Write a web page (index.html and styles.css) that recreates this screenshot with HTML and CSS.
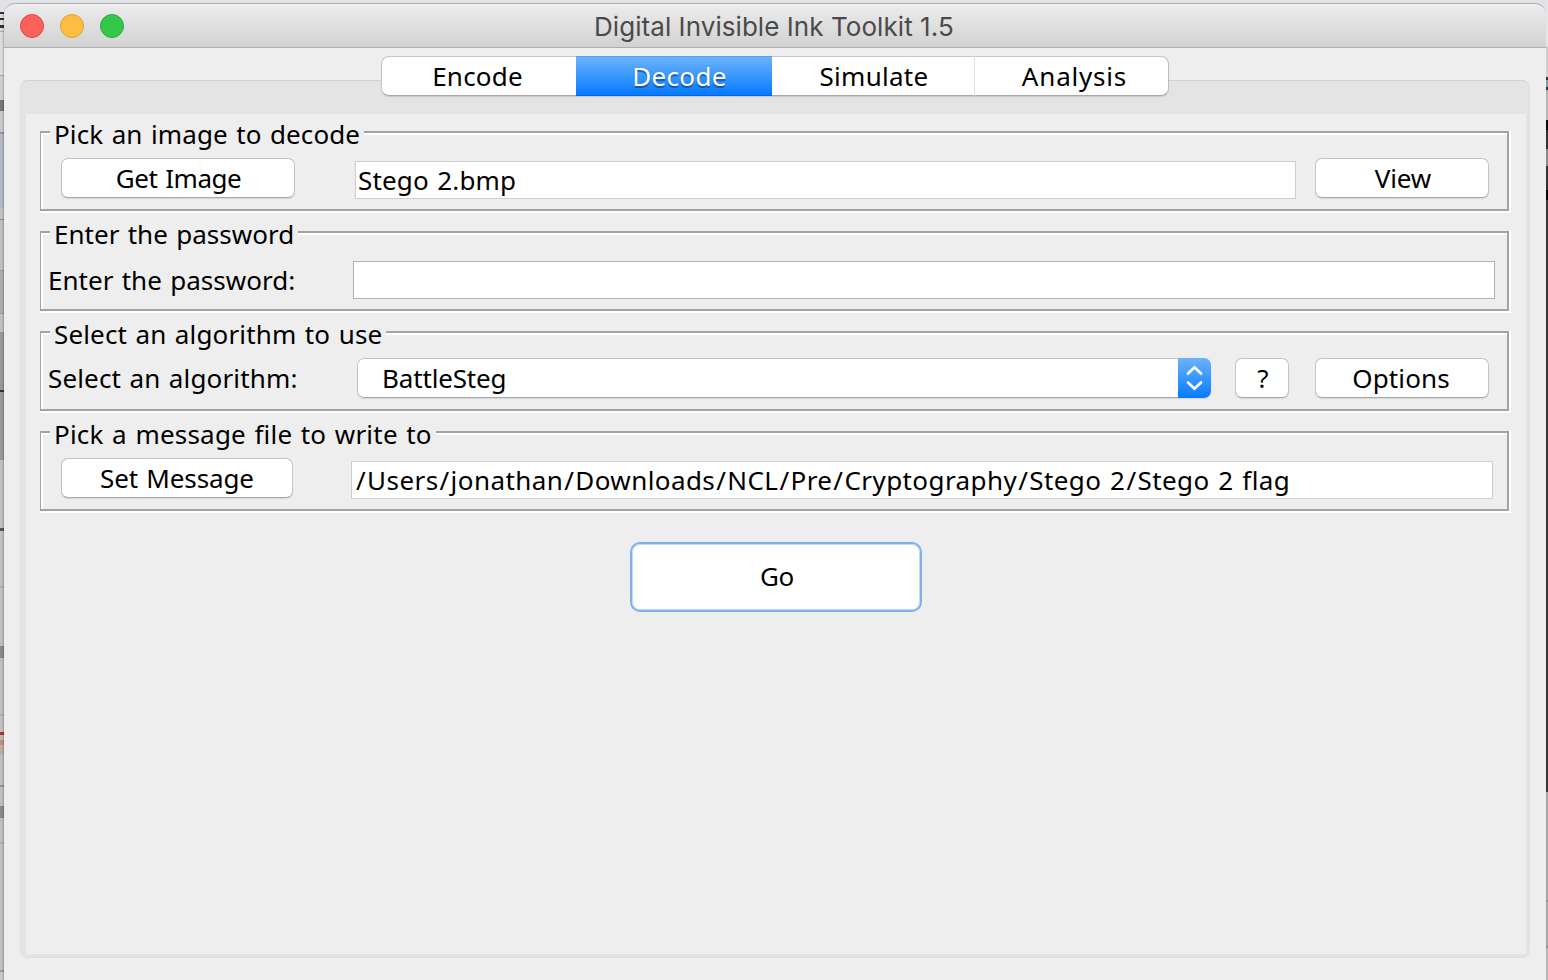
FILE: index.html
```
<!DOCTYPE html>
<html lang="en">
<head>
<meta charset="utf-8">
<title>Digital Invisible Ink Toolkit 1.5</title>
<link rel="stylesheet" href="styles.css">
</head>
<body>
<div class="desktop">
  <div class="behind-left"></div>
  <main class="window">
    <header class="titlebar">
      <div class="lights"><i class="light close"></i><i class="light minimize"></i><i class="light maximize"></i></div>
      <h1 class="title">Digital Invisible Ink Toolkit 1.5</h1>
    </header>
    <nav class="tabs">
      <button class="tab tab-encode">Encode</button>
      <button class="tab tab-decode active">Decode</button>
      <button class="tab tab-simulate">Simulate</button>
      <button class="tab tab-analysis">Analysis</button>
    </nav>
    <div class="pane">
      <div class="pane-body">
        <section class="group"><div class="group-frame">
          <h2 class="legend legend-image">Pick an image to decode</h2>
          <div class="row">
            <button class="button get-image">Get Image</button>
            <div class="field image-path">Stego 2.bmp</div>
            <button class="button view">View</button>
          </div>
        </div></section>
        <section class="group"><div class="group-frame">
          <h2 class="legend legend-password">Enter the password</h2>
          <div class="row">
            <label class="label label-password">Enter the password:</label>
            <div class="field password"></div>
          </div>
        </div></section>
        <section class="group"><div class="group-frame">
          <h2 class="legend legend-algorithm">Select an algorithm to use</h2>
          <div class="row">
            <label class="label label-algorithm">Select an algorithm:</label>
            <div class="combo">
              <span class="combo-value">BattleSteg</span>
              <span class="combo-arrows"><svg width="33" height="40" viewBox="0 0 33 40" fill="none" stroke="#fff" stroke-width="2.7" stroke-linecap="round" stroke-linejoin="miter"><path d="M10 15.5 16.5 9.3 23 15.5M10 24.5 16.5 30.7 23 24.5"/></svg></span>
            </div>
            <button class="button help">?</button>
            <button class="button options">Options</button>
          </div>
        </div></section>
        <section class="group"><div class="group-frame">
          <h2 class="legend legend-message">Pick a message file to write to</h2>
          <div class="row">
            <button class="button set-message">Set Message</button>
            <div class="field message-path"><span class="sep">/</span>Users<span class="sep">/</span>jonathan<span class="sep">/</span>Downloads<span class="sep">/</span>NCL<span class="sep">/</span>Pre<span class="sep">/</span>Cryptography<span class="sep">/</span>Stego 2<span class="sep">/</span>Stego 2 flag</div>
          </div>
        </div></section>
        <button class="go">Go</button>
      </div>
    </div>
  </main>
  <div class="behind-right"></div>
</div>
</body>
</html>
```

FILE: styles.css
```
* { box-sizing: border-box; }

body {
  margin: 0;
  overflow: hidden;
  font: 26px/30px "Noto Sans", sans-serif;
  word-spacing: 1.5px;
  color: #000;
}

button, h1, h2 {
  margin: 0;
  padding: 0;
  font: inherit;
  color: inherit;
  letter-spacing: inherit;
  word-spacing: inherit;
}

.desktop {
  display: grid;
  grid-template-columns: 4px 1542px 2px;
  height: 980px;
  background: linear-gradient(#e1e3e6 0 14px, #b4b4b4 14px);
}

/* Slivers of the windows lying behind this one */
.behind-left {
  background:
    linear-gradient(90deg, transparent 2px, rgba(0, 0, 0, .22)) 0 12px / 4px 968px no-repeat,
    linear-gradient(
      #e1e3e6 0 12px, #333 12px 14px, #dedede 14px 18px, #333 18px 20px, #dedede 20px 25px, #333 25px 28px,
      #dedede 28px 31px, #aaa 31px 32px, #dcdcdc 32px 75px, #aaa 75px 76px, #cfcfcf 76px 100px,
      #777 100px 111px, #c8c8c8 111px 132px, #969696 132px 134px, #b3bac5 134px 208px,
      #c2c2c0 208px 219px, #8c8c8c 219px 220px, #c0c0be 220px 270px, #9c9c9a 270px 271px,
      #adadab 271px 313px, #9c9c9a 313px 314px, #c0c0be 314px 332px, #999896 332px 390px,
      #333 390px 392px, #999896 392px 460px, #c0c0be 460px 528px, #555 528px 531px,
      #c0c0be 531px 586px, #adadab 586px 588px, #c0c0be 588px 646px, #888 646px 658px,
      #c0c0be 658px 714px, #adadab 714px 716px, #c0c0be 716px 732px, #b52f31 732px 735px,
      #c3b8aa 735px 740px, #c88 740px 745px, #b9b0a0 745px 755px, #c0c0be 755px 785px,
      #8099b0 785px 787px, #c0c0be 787px 806px, #888 806px 818px, #c0c0be 818px 842px,
      #adadab 842px 844px, #c0c0be 844px 970px, #999 970px 972px, #c8c8c8 972px);
}

.behind-right {
  background: linear-gradient(
    #e4e6e9 0 46px, #cfcfcf 46px 77px, #30383e 77px 80px, #75a0bd 80px 87px, #30383e 87px 90px,
    #b4b4b4 90px 120px, #0c0c0c 120px 130px, #303234 130px 149px, #8a8a8a 149px 166px,
    #303234 166px 190px, #060606 190px 200px, #36393c 200px 792px, #a6a6a6 792px 900px,
    #8c8c8c 900px 902px, #a8a8a8 902px 946px, #8c8c8c 946px 948px, #b4b4b4 948px);
}

.window {
  display: flex;
  flex-direction: column;
  margin-top: 3px;
  height: 977px;
  border-radius: 11px 11px 0 0;
  background: #eee;
}

.titlebar {
  display: grid;
  grid-template-columns: 590px 1fr;
  align-items: center;
  height: 45px;
  border-top: 1px solid #acacae;
  border-bottom: 1px solid #aeaeae;
  border-radius: 11px 11px 0 0;
  background: linear-gradient(#f4f4f4 0, #ebebeb 2px, #d2d2d2);
}

.lights { display: flex; gap: 16px; padding-left: 16px; }
.light { width: 24px; height: 24px; border-radius: 50%; border: 1px solid; }
.close { background: #fc615d; border-color: #e2443f; }
.minimize { background: #fdbd41; border-color: #e0a033; }
.maximize { background: #34c84a; border-color: #27ab35; }

.title {
  margin-top: 2px;
  font-family: Inter, sans-serif;
  letter-spacing: .06px;
  word-spacing: 0;
  color: #4a4a4a;
  white-space: nowrap;
}

.tabs {
  position: relative;
  z-index: 1;
  display: flex;
  width: 788px;
  height: 40px;
  margin: 8px 0 0 377px;
  border-radius: 8px;
  box-shadow: 0 1px 1px rgba(0, 0, 0, .12);
}

.tab {
  height: 40px;
  border: solid #c6c6c6;
  border-width: 1px 0;
  border-bottom-color: #a8a8a8;
  background: #fff;
}
.tab-encode { width: 195px; padding-right: 3px; border-left-width: 1px; border-radius: 8px 0 0 8px; letter-spacing: .2px; }
.tab-decode { width: 196px; padding-left: 11px; letter-spacing: .3px; }
.tab-simulate { width: 202px; padding-left: 2px; letter-spacing: .28px; }
.tab-analysis { width: 195px; padding-left: 6px; border-left: 1px solid #dedede; border-right: 1px solid #bdbdbd; border-radius: 0 8px 8px 0; letter-spacing: .8px; }
.tab.active {
  color: #fff;
  text-shadow: 0 2px 1px rgba(0, 40, 110, .55);
  border-top-color: #52a3f7;
  border-bottom-color: #0564e4;
  background: linear-gradient(#6cb3fa, #067bff);
}

.pane {
  width: 1510px;
  height: 878px;
  margin: -16px 0 0 16px;
  padding: 33px 3px 3px 5px;
  border: 1px solid #dfdfdf;
  border-top-color: #d2d2d2;
  border-radius: 8px;
  background: #e4e4e4;
}

.pane-body {
  display: flex;
  flex-direction: column;
  gap: 18px;
  height: 840px;
  padding: 17px 15px 0 14px;
  background: #eee;
}

/* Etched border: grey line with a white highlight down and to the right */
.group {
  width: 1471px;
  height: 82px;
  border: solid #fff;
  border-width: 0 2px 2px 0;
}
.group-frame {
  height: 80px;
  border: 2px solid #a3a3a3;
  border-left-width: 1px;
  box-shadow: inset 2px 2px #fff;
}

.legend {
  height: 30px;
  margin: -14px 0 0 9px;
  padding-left: 4px;
  background: #eee;
  white-space: nowrap;
}
.legend-image { width: 314px; letter-spacing: .12px; }
.legend-password { width: 248px; letter-spacing: .02px; }
.legend-algorithm { width: 336px; letter-spacing: .15px; }
.legend-message { width: 386px; letter-spacing: .21px; }

.row { display: flex; height: 41px; margin-top: 9px; white-space: nowrap; }

.button {
  height: 40px;
  border: 1px solid #c4c4c4;
  border-bottom-color: #aaa;
  border-radius: 7px;
  background: #fff;
  box-shadow: 0 1px 1px rgba(0, 0, 0, .1);
}
.get-image { width: 234px; margin-left: 20px; padding-left: 1px; letter-spacing: -.45px; }
.view { width: 174px; margin-left: 19px; padding-left: 2px; letter-spacing: -.15px; }
.help { width: 54px; margin-left: 24px; padding-left: 2px; }
.options { width: 174px; margin-left: 26px; padding-right: 2px; letter-spacing: .14px; }
.set-message { width: 232px; margin-left: 20px; letter-spacing: -.1px; }

.field {
  height: 38px;
  margin-top: 3px;
  padding-top: 3px;
  border: 1px solid #cecece;
  background: #fff;
}
.image-path { width: 941px; margin-left: 60px; padding-left: 2px; letter-spacing: .16px; }
.password { width: 1142px; border-color: #b2b2b2; }
.message-path { width: 1142px; margin-left: 58px; padding-left: 3px; letter-spacing: .42px; }
.sep { margin: 0 1px; }

.label-password { width: 312px; padding: 7px 0 0 7px; letter-spacing: .02px; }
.label-algorithm { width: 316px; padding: 5px 0 0 7px; letter-spacing: .15px; }

.combo {
  display: flex;
  width: 854px;
  height: 40px;
  border-radius: 7px;
  overflow: hidden;
  box-shadow: 0 1px 1px rgba(0, 0, 0, .1);
}
.combo-value {
  flex: 1;
  padding: 4px 0 0 24px;
  border: 1px solid #c4c4c4;
  border-right: 0;
  border-bottom-color: #aaa;
  border-radius: 7px 0 0 7px;
  background: #fff;
  letter-spacing: -.15px;
}
.combo-arrows { width: 33px; background: linear-gradient(#6cb3fa, #067bff); }
.combo-arrows svg { display: block; }

.go {
  width: 292px;
  height: 70px;
  margin: 11px 0 0 590px;
  padding: 0 0 2px 2px;
  border: 2px solid #7fb2ea;
  border-radius: 10px;
  background: #fff;
  box-shadow: inset 0 0 0 1px #c3dcf8;
  letter-spacing: -.4px;
}
```
